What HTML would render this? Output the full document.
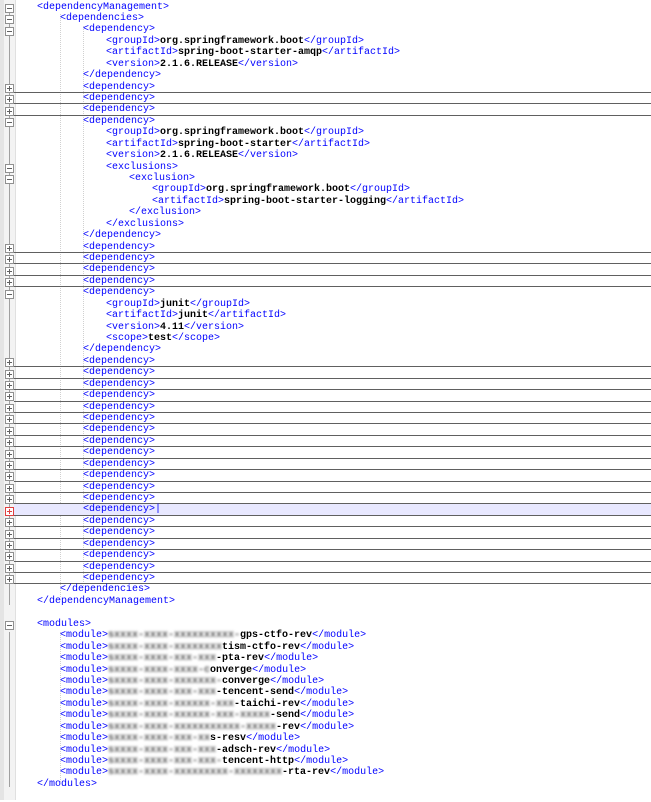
<!DOCTYPE html>
<html><head><meta charset="utf-8"><style>
body{margin:0;width:651px;height:800px;background:#fff;overflow:hidden;position:relative;font-family:"Liberation Mono","Courier New",monospace;font-size:10px;}
.m1{position:absolute;left:0;top:0;width:4px;height:800px;background:#e4e4e4}
.m2{position:absolute;left:4px;top:0;width:11px;height:800px;background:#f3f3f3;border-right:1px solid #e0e0e0}
.vl{position:absolute;left:9px;width:1px;background:#a0a0a0}
.l{position:absolute;left:14px;right:0;height:11.43px;line-height:11.43px;white-space:pre;color:#0000ff}
.a{padding-left:23px}.b{padding-left:46px}.c{padding-left:69px}.d{padding-left:92px}.e{padding-left:115px}.g{padding-left:138px}
.f{border-bottom:1px solid #606060;height:10.43px}
.h{background:#e8e8ff}
.l b{color:#000;font-weight:bold}
.bl{color:#555;font-weight:bold;filter:blur(1.2px)}
.bx{position:absolute;left:5px;width:7px;height:7px;border:1px solid #909090;background:#fff}
.bx:before{content:"";position:absolute;left:1px;top:3px;width:5px;height:1px;background:#606060}
.p:after{content:"";position:absolute;left:3px;top:1px;width:1px;height:5px;background:#606060}
.r{border-color:#e04040}.r:before,.r:after{background:#e04040!important}
.ig{position:absolute;width:0;border-left:1px dotted #d0d0d0}
.w{position:absolute;left:0;top:1.5px;width:651px;height:800px}
</style></head><body>
<div class="m1"></div><div class="m2"></div>
<div class="w">
<div class="vl" style="top:8px;height:595px"></div>
<div class="vl" style="top:630px;height:155px"></div>
<div class="ig" style="left:60px;top:12px;height:583px"></div>
<div class="ig" style="left:83px;top:24px;height:560px"></div>
<div class="ig" style="left:60px;top:630px;height:150px"></div>

<div class="l a" style="top:0px">&lt;dependencyManagement&gt;</div>
<div class="l b" style="top:11.4px">&lt;dependencies&gt;</div>
<div class="l c" style="top:22.9px">&lt;dependency&gt;</div>
<div class="l d" style="top:34.3px">&lt;groupId&gt;<b>org.springframework.boot</b>&lt;/groupId&gt;</div>
<div class="l d" style="top:45.7px">&lt;artifactId&gt;<b>spring-boot-starter-amqp</b>&lt;/artifactId&gt;</div>
<div class="l d" style="top:57.2px">&lt;version&gt;<b>2.1.6.RELEASE</b>&lt;/version&gt;</div>
<div class="l c" style="top:68.6px">&lt;/dependency&gt;</div>
<div class="l c f" style="top:80px">&lt;dependency&gt;</div>
<div class="l c f" style="top:91.4px">&lt;dependency&gt;</div>
<div class="l c f" style="top:102.9px">&lt;dependency&gt;</div>
<div class="l c" style="top:114.3px">&lt;dependency&gt;</div>
<div class="l d" style="top:125.7px">&lt;groupId&gt;<b>org.springframework.boot</b>&lt;/groupId&gt;</div>
<div class="l d" style="top:137.2px">&lt;artifactId&gt;<b>spring-boot-starter</b>&lt;/artifactId&gt;</div>
<div class="l d" style="top:148.6px">&lt;version&gt;<b>2.1.6.RELEASE</b>&lt;/version&gt;</div>
<div class="l d" style="top:160px">&lt;exclusions&gt;</div>
<div class="l e" style="top:171.4px">&lt;exclusion&gt;</div>
<div class="l g" style="top:182.9px">&lt;groupId&gt;<b>org.springframework.boot</b>&lt;/groupId&gt;</div>
<div class="l g" style="top:194.3px">&lt;artifactId&gt;<b>spring-boot-starter-logging</b>&lt;/artifactId&gt;</div>
<div class="l e" style="top:205.7px">&lt;/exclusion&gt;</div>
<div class="l d" style="top:217.2px">&lt;/exclusions&gt;</div>
<div class="l c" style="top:228.6px">&lt;/dependency&gt;</div>
<div class="l c f" style="top:240px">&lt;dependency&gt;</div>
<div class="l c f" style="top:251.5px">&lt;dependency&gt;</div>
<div class="l c f" style="top:262.9px">&lt;dependency&gt;</div>
<div class="l c f" style="top:274.3px">&lt;dependency&gt;</div>
<div class="l c" style="top:285.8px">&lt;dependency&gt;</div>
<div class="l d" style="top:297.2px">&lt;groupId&gt;<b>junit</b>&lt;/groupId&gt;</div>
<div class="l d" style="top:308.6px">&lt;artifactId&gt;<b>junit</b>&lt;/artifactId&gt;</div>
<div class="l d" style="top:320px">&lt;version&gt;<b>4.11</b>&lt;/version&gt;</div>
<div class="l d" style="top:331.5px">&lt;scope&gt;<b>test</b>&lt;/scope&gt;</div>
<div class="l c" style="top:342.9px">&lt;/dependency&gt;</div>
<div class="l c f" style="top:354.3px">&lt;dependency&gt;</div>
<div class="l c f" style="top:365.8px">&lt;dependency&gt;</div>
<div class="l c f" style="top:377.2px">&lt;dependency&gt;</div>
<div class="l c f" style="top:388.6px">&lt;dependency&gt;</div>
<div class="l c f" style="top:400.1px">&lt;dependency&gt;</div>
<div class="l c f" style="top:411.5px">&lt;dependency&gt;</div>
<div class="l c f" style="top:422.9px">&lt;dependency&gt;</div>
<div class="l c f" style="top:434.3px">&lt;dependency&gt;</div>
<div class="l c f" style="top:445.8px">&lt;dependency&gt;</div>
<div class="l c f" style="top:457.2px">&lt;dependency&gt;</div>
<div class="l c f" style="top:468.6px">&lt;dependency&gt;</div>
<div class="l c f" style="top:480.1px">&lt;dependency&gt;</div>
<div class="l c f" style="top:491.5px">&lt;dependency&gt;</div>
<div class="l c f h" style="top:502.9px">&lt;dependency&gt;|</div>
<div class="l c f" style="top:514.4px">&lt;dependency&gt;</div>
<div class="l c f" style="top:525.8px">&lt;dependency&gt;</div>
<div class="l c f" style="top:537.2px">&lt;dependency&gt;</div>
<div class="l c f" style="top:548.6px">&lt;dependency&gt;</div>
<div class="l c f" style="top:560.1px">&lt;dependency&gt;</div>
<div class="l c f" style="top:571.5px">&lt;dependency&gt;</div>
<div class="l b" style="top:582.9px">&lt;/dependencies&gt;</div>
<div class="l a" style="top:594.4px">&lt;/dependencyManagement&gt;</div>
<div class="l a" style="top:617.2px">&lt;modules&gt;</div>
<div class="l b" style="top:628.7px">&lt;module&gt;<span class="bl">sxxxx-xxxx-xxxxxxxxxx-</span><b>gps-ctfo-rev</b>&lt;/module&gt;</div>
<div class="l b" style="top:640.1px">&lt;module&gt;<span class="bl">sxxxx-xxxx-xxxxxxxx</span><b>tism-ctfo-rev</b>&lt;/module&gt;</div>
<div class="l b" style="top:651.5px">&lt;module&gt;<span class="bl">sxxxx-xxxx-xxx-xxx</span><b>-pta-rev</b>&lt;/module&gt;</div>
<div class="l b" style="top:663px">&lt;module&gt;<span class="bl">sxxxx-xxxx-xxxx-c</span><b>onverge</b>&lt;/module&gt;</div>
<div class="l b" style="top:674.4px">&lt;module&gt;<span class="bl">sxxxx-xxxx-xxxxxxx-</span><b>converge</b>&lt;/module&gt;</div>
<div class="l b" style="top:685.8px">&lt;module&gt;<span class="bl">sxxxx-xxxx-xxx-xxx</span><b>-tencent-send</b>&lt;/module&gt;</div>
<div class="l b" style="top:697.3px">&lt;module&gt;<span class="bl">sxxxx-xxxx-xxxxxx-xxx</span><b>-taichi-rev</b>&lt;/module&gt;</div>
<div class="l b" style="top:708.7px">&lt;module&gt;<span class="bl">sxxxx-xxxx-xxxxxx-xxx-xxxxx</span><b>-send</b>&lt;/module&gt;</div>
<div class="l b" style="top:720.1px">&lt;module&gt;<span class="bl">sxxxx-xxxx-xxxxxxxxxxx-xxxxx</span><b>-rev</b>&lt;/module&gt;</div>
<div class="l b" style="top:731.5px">&lt;module&gt;<span class="bl">sxxxx-xxxx-xxx-xx</span><b>s-resv</b>&lt;/module&gt;</div>
<div class="l b" style="top:743px">&lt;module&gt;<span class="bl">sxxxx-xxxx-xxx-xxx</span><b>-adsch-rev</b>&lt;/module&gt;</div>
<div class="l b" style="top:754.4px">&lt;module&gt;<span class="bl">sxxxx-xxxx-xxx-xxx-</span><b>tencent-http</b>&lt;/module&gt;</div>
<div class="l b" style="top:765.8px">&lt;module&gt;<span class="bl">sxxxx-xxxx-xxxxxxxxx-xxxxxxxx</span><b>-rta-rev</b>&lt;/module&gt;</div>
<div class="l a" style="top:777.3px">&lt;/modules&gt;</div>

<div class="bx" style="top:2px"></div>
<div class="bx" style="top:13px"></div>
<div class="bx" style="top:25px"></div>
<div class="bx" style="top:116px"></div>
<div class="bx" style="top:162px"></div>
<div class="bx" style="top:173px"></div>
<div class="bx" style="top:288px"></div>
<div class="bx" style="top:619px"></div>
<div class="bx p" style="top:82px"></div>
<div class="bx p" style="top:93px"></div>
<div class="bx p" style="top:105px"></div>
<div class="bx p" style="top:242px"></div>
<div class="bx p" style="top:253px"></div>
<div class="bx p" style="top:265px"></div>
<div class="bx p" style="top:276px"></div>
<div class="bx p" style="top:356px"></div>
<div class="bx p" style="top:368px"></div>
<div class="bx p" style="top:379px"></div>
<div class="bx p" style="top:390px"></div>
<div class="bx p" style="top:402px"></div>
<div class="bx p" style="top:413px"></div>
<div class="bx p" style="top:425px"></div>
<div class="bx p" style="top:436px"></div>
<div class="bx p" style="top:448px"></div>
<div class="bx p" style="top:459px"></div>
<div class="bx p" style="top:470px"></div>
<div class="bx p" style="top:482px"></div>
<div class="bx p" style="top:493px"></div>
<div class="bx p r" style="top:505px"></div>
<div class="bx p" style="top:516px"></div>
<div class="bx p" style="top:528px"></div>
<div class="bx p" style="top:539px"></div>
<div class="bx p" style="top:550px"></div>
<div class="bx p" style="top:562px"></div>
<div class="bx p" style="top:573px"></div>
</div>
</body></html>
